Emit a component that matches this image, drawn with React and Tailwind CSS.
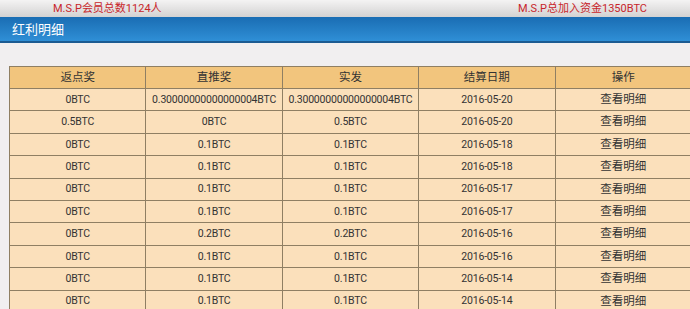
import React from "react";

const rows = [
  ["0BTC", "0.30000000000000004BTC", "0.30000000000000004BTC", "2016-05-20"],
  ["0.5BTC", "0BTC", "0.5BTC", "2016-05-20"],
  ["0BTC", "0.1BTC", "0.1BTC", "2016-05-18"],
  ["0BTC", "0.1BTC", "0.1BTC", "2016-05-18"],
  ["0BTC", "0.1BTC", "0.1BTC", "2016-05-17"],
  ["0BTC", "0.1BTC", "0.1BTC", "2016-05-17"],
  ["0BTC", "0.2BTC", "0.2BTC", "2016-05-16"],
  ["0BTC", "0.1BTC", "0.1BTC", "2016-05-16"],
  ["0BTC", "0.1BTC", "0.1BTC", "2016-05-14"],
  ["0BTC", "0.1BTC", "0.1BTC", "2016-05-14"],
];

const headers = ["返点奖", "直推奖", "实发", "结算日期", "操作"];

export default function App() {
  return (
    <div
      className="w-[690px] h-[309px] overflow-hidden bg-[#f1eff0]"
      style={{ fontFamily: 'Roboto, "Noto Sans CJK SC", sans-serif' }}
    >
      {/* 顶部统计 */}
      <div className="h-[17px] flex items-center justify-between pl-[53px] pr-[43px] bg-gradient-to-b from-[#f4f3f3] to-[#d3d2d2] text-[11px] text-[#c8262b] leading-none">
        <span>M.S.P会员总数1124人</span>
        <span>M.S.P总加入资金1350BTC</span>
      </div>

      {/* 标题栏 */}
      <div className="h-[26px] flex items-center pl-[12px] bg-gradient-to-b from-[#1a6db3] to-[#2f8fd6] border-b-2 border-[#1c5b92] text-white text-[13px] leading-none">
        红利明细
      </div>

      <div className="pt-[23px] pl-[9px]">
        <table className="w-[683px] table-fixed border-collapse text-[#333] text-center">
          <thead>
            <tr className="h-[22px] bg-[#f2c57d] text-[11.5px]">
              {headers.map((h) => (
                <th key={h} className="font-normal border border-[#8f7f63] p-0">
                  {h}
                </th>
              ))}
            </tr>
          </thead>
          <tbody>
            {rows.map((r, i) => (
              <tr key={i} className="h-[22.4px] bg-[#fbe0bb]">
                {r.map((c, j) => (
                  <td
                    key={j}
                    className="border border-[#8f7f63] p-0 text-[10.5px] tracking-[-0.2px]"
                  >
                    {c}
                  </td>
                ))}
                <td className="border border-[#8f7f63] p-0 text-[11.5px]">
                  查看明细
                </td>
              </tr>
            ))}
          </tbody>
        </table>
      </div>
    </div>
  );
}
